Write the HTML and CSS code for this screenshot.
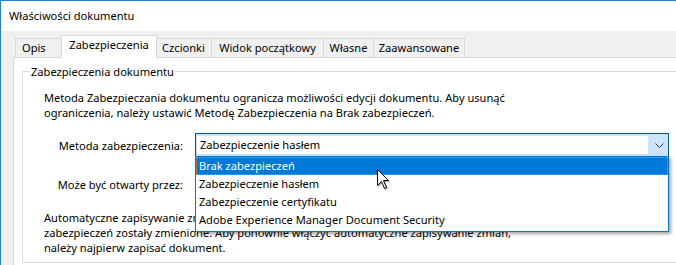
FILE: index.html
```html
<!DOCTYPE html>
<html lang="pl">
<head>
<meta charset="utf-8">
<title>Właściwości dokumentu</title>
<link rel="stylesheet" href="styles.css">
</head>
<body>
<div class="window">
  <div class="titlebar">Właściwości dokumentu</div>
  <div class="client">
    <div class="tabs">
      <div class="tab tab-opis">Opis</div>
      <div class="tab tab-sel">Zabezpieczenia</div>
      <div class="tab tab-czcionki">Czcionki</div>
      <div class="tab tab-widok">Widok początkowy</div>
      <div class="tab tab-wlasne">Własne</div>
      <div class="tab tab-zaaw">Zaawansowane</div>
    </div>
    <div class="panel">
      <fieldset class="group">
        <legend class="group-title">Zabezpieczenia dokumentu</legend>
        <p class="desc">Metoda Zabezpieczania dokumentu ogranicza możliwości edycji dokumentu. Aby usunąć<br>ograniczenia, należy ustawić Metodę Zabezpieczenia na Brak zabezpieczeń.</p>
        <div class="row row-method">
          <span class="label">Metoda zabezpieczenia:</span>
          <div class="combo">
            <span class="combo-edit">Zabezpieczenie hasłem</span>
            <span class="combo-btn">
              <svg class="chevron" width="9" height="5" viewBox="0 0 9 5"><polyline points="0.5,0.5 4.5,4.5 8.5,0.5" fill="none" stroke="#3a3a3a" stroke-width="1"/></svg>
            </span>
            <ul class="dropdown">
              <li class="item item-sel">Brak zabezpieczeń</li>
              <li class="item">Zabezpieczenie hasłem</li>
              <li class="item">Zabezpieczenie certyfikatu</li>
              <li class="item">Adobe Experience Manager Document Security</li>
            </ul>
          </div>
        </div>
        <div class="row row-open">
          <span class="label">Może być otwarty przez:</span>
        </div>
        <p class="note">Automatyczne zapisywanie zmian zostało wyłączone, ponieważ ustawienia<br>zabezpieczeń zostały zmienione. Aby ponownie włączyć automatyczne zapisywanie zmian,<br>należy najpierw zapisać dokument.</p>
      </fieldset>
    </div>
  </div>
  <svg class="cursor" width="14" height="21" viewBox="0 0 14 21">
    <path d="M0.5,0.5 L0.5,16.5 L4.5,12.5 L7.5,19.5 L9.5,18.5 L6.5,11.5 L11.5,11.5 Z" fill="#fff" stroke="#000" stroke-width="1" stroke-linejoin="miter"/>
  </svg>
</div>
</body>
</html>
```
FILE: styles.css
```css
* { box-sizing: border-box; }
html, body { margin: 0; padding: 0; }
body {
  width: 676px;
  height: 265px;
  overflow: hidden;
  background: #f0f0f0;
  font-family: "Noto Sans", "Open Sans", sans-serif;
  font-size: 11.1px;
  color: #000;
}
.window {
  position: relative;
  height: 265px;
  border-top: 1px solid #1a82d9;
  border-left: 1px solid #1a82d9;
  background: #f0f0f0;
  overflow: hidden;
}
.titlebar {
  height: 30px;
  background: #fff;
  padding: 7px 0 0 8px;
  line-height: 15px;
}
.client {
  padding: 4px 0 0 12px;
}
.tabs {
  display: flex;
  align-items: flex-end;
  height: 22px;
  padding-left: 2px;
  position: relative;
  z-index: 1;
}
.tab {
  flex: none;
  height: 19px;
  margin-left: -1px;
  padding-top: 1px;
  border: 1px solid #d9d9d9;
  border-bottom: none;
  background: #f0f0f0;
  line-height: 15px;
  text-align: center;
  white-space: nowrap;
}
.tab-opis { margin-left: 0; width: 48px; text-align: left; padding-left: 6px; }
.tab-sel {
  width: 96px;
  height: 23px;
  margin: 0 -1px -1px -2px;
  background: #fff;
  position: relative;
  z-index: 2;
}
.tab-czcionki { width: 57px; }
.tab-widok { width: 113px; }
.tab-wlasne { width: 51px; }
.tab-zaaw { width: 92px; }

.panel {
  height: 240px;
  margin-right: -40px;
  padding: 6px 0 0 8px;
  background: #fff;
  border-top: 1px solid #d9d9d9;
  border-left: 1px solid #d9d9d9;
}
.group {
  margin: 0;
  padding: 0 0 7px 0;
  min-width: 0;
  border: 1px solid #dcdcdc;
}
.group-title {
  margin-left: 7px;
  padding: 0 1px;
  line-height: 15px;
}
.desc {
  margin: 11px 0 0 21px;
  line-height: 15px;
  white-space: nowrap;
}
.row {
  display: flex;
  align-items: center;
  height: 24px;
  margin-left: 21px;
}
.row-method { margin-top: 13px; }
.row-open { margin-top: 15px; }
.label {
  flex: none;
  width: 139px;
  margin-right: 12px;
  text-align: right;
  line-height: 15px;
  white-space: nowrap;
}
.combo {
  flex: none;
  position: relative;
  display: flex;
  width: 474px;
  height: 24px;
  border: 1px solid #005499;
  background: #cce4f7;
}
.combo-edit {
  width: 451px;
  margin: 2px 0 2px 1px;
  padding-left: 3px;
  background: #fff;
  line-height: 18px;
  white-space: nowrap;
}
.combo-btn {
  flex: 1;
  display: flex;
  align-items: center;
  justify-content: center;
  padding-left: 2px;
}
.chevron { display: block; }
.dropdown {
  position: absolute;
  left: -1px;
  top: 100%;
  width: 474px;
  margin: 0;
  padding: 0 0 2px 0;
  list-style: none;
  background: #fff;
  border: 1px solid #0078d7;
  box-shadow: 2px 2px 3px rgba(0, 0, 0, 0.35);
  z-index: 5;
}
.item {
  height: 18px;
  padding-left: 2px;
  border: 1px solid transparent;
  line-height: 16px;
  white-space: nowrap;
}
.item-sel {
  background: #0078d7;
  color: #fff;
  border: 1px dotted #ff8728;
}
.note {
  margin: 14px 0 0 21px;
  line-height: 15px;
  white-space: nowrap;
}
.cursor {
  position: absolute;
  left: 376px;
  top: 168px;
  z-index: 10;
  filter: drop-shadow(1px 1px 0.5px rgba(0, 0, 0, 0.3));
}
```
